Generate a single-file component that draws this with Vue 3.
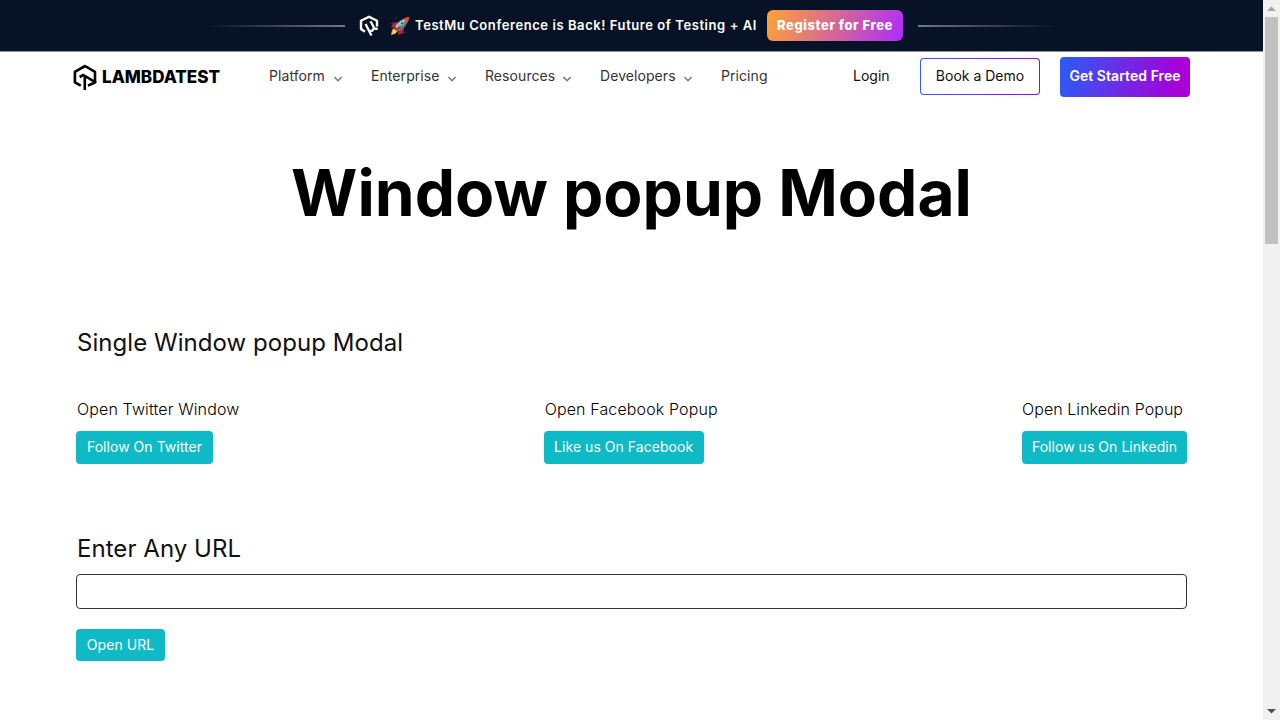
<script setup>
const menu = [
  { label: 'Platform', width: 102, text: 57, drop: true },
  { label: 'Enterprise', width: 114, text: 69, drop: true },
  { label: 'Resources', width: 115, text: 70, drop: true },
  { label: 'Developers', width: 121, text: 76, drop: true },
  { label: 'Pricing', width: 60, text: 47, drop: false }
]
const popups = [
  { title: 'Open Twitter Window', button: 'Follow On Twitter', id: 'twitter' },
  { title: 'Open Facebook Popup', button: 'Like us On Facebook', id: 'facebook' },
  { title: 'Open Linkedin Popup', button: 'Follow us On Linkedin', id: 'linkedin' }
]
</script>

<template>
  <div class="window">
    <div class="page">
      <div class="banner">
        <span class="line left"></span>
        <svg class="mu" viewBox="0 0 20 22" width="20" height="22">
          <path d="M6 16.8 2 14V5.8L10 1.7 18 5.8V11.5" fill="none" stroke="#fff" stroke-width="2.4" stroke-linejoin="round" />
          <path d="M6.6 9 12.4 20.4M11.6 6.2 15 12.8Q16 14.6 18.6 13.4M10.2 15.6Q14.4 16.8 14.8 12.5" fill="none" stroke="#fff" stroke-width="2.3" />
        </svg>
        <svg class="rocket" viewBox="0 0 20 20" width="20" height="20">
          <path d="M1 8 4 6M5 2l2-1M13 17l3-1" stroke="#303d4d" stroke-width="1" />
          <path d="M8 6 3 7 1 12l5-1zM14 12l-1 5-5 2 1-6z" fill="#bd2431" />
          <path d="M5 11Q8 4 18 1.5 17.5 11 8.7 15z" fill="#9abac6" />
          <path d="M6.5 12.5Q12 10 18 1.5 17.5 11 8.7 15z" fill="#547e8f" />
          <path d="M13 3Q16 1.2 19.3 .8 19.3 4.5 17 7.4 16.3 4.5 13 3z" fill="#ee4931" />
          <circle cx="12.2" cy="7.4" r="1.6" fill="#304f67" stroke="#c5dbe3" stroke-width=".7" />
          <path d="M4 12 2 14 1 19l4-1 3-3z" fill="#f7a331" />
          <path d="M4 14 2 18l4-2z" fill="#fff19b" />
          <path d="M9 10 5 15 11 12z" fill="#c72c35" />
        </svg>
        <span class="announce">TestMu Conference is Back! Future of Testing + AI</span>
        <a class="register">Register for Free</a>
        <span class="line right"></span>
      </div>

      <header class="header">
        <div class="brand">
          <svg viewBox="0 0 24 27" width="24" height="27">
            <path d="M7.8 21.6 1.9 18.3V7.8L12 2 22 7.8V18" fill="none" stroke="#000" stroke-width="2.6" stroke-linejoin="round" />
            <path d="M6.6 13 10.3 11 22.3 18.2 15 21.6M11.8 12.5V26" fill="none" stroke="#000" stroke-width="2.6" stroke-linejoin="round" />
          </svg>
          <svg class="wordmark" width="120" height="20" viewBox="0 0 120 20">
            <text x="0" y="15.8" textLength="118" lengthAdjust="spacingAndGlyphs">LAMBDATEST</text>
          </svg>
        </div>
        <nav class="nav">
          <div v-for="item in menu" :key="item.label" class="item" :style="{ width: item.width + 'px' }">
            <span :style="{ width: item.text + 'px' }">{{ item.label }}</span>
            <svg v-if="item.drop" width="10" height="8" viewBox="0 0 10 8">
              <path d="M1.4 2 5 5.7 8.6 2" fill="none" stroke="#777" stroke-width="1.5" />
            </svg>
          </div>
        </nav>
        <a class="login">Login</a>
        <a class="demo">Book a Demo</a>
        <a class="start">Get Started Free</a>
      </header>

      <h1>Window popup Modal</h1>

      <main>
        <h2>Single Window popup Modal</h2>
        <div class="popups">
          <section v-for="p in popups" :key="p.id" :class="p.id">
            <p>{{ p.title }}</p>
            <button class="teal">{{ p.button }}</button>
          </section>
        </div>
        <h2 class="url-title">Enter Any URL</h2>
        <input type="text" aria-label="URL" />
        <button class="teal open">Open URL</button>
      </main>
    </div>
    <div class="scrollbar">
      <svg width="17" height="17"><path d="M4 11h9L8.5 6.5z" fill="#a3a3a3" /></svg>
      <div class="thumb"></div>
      <svg class="down" width="17" height="17"><path d="M4 6h9L8.5 10.5z" fill="#505050" /></svg>
    </div>
  </div>
</template>

<style>
body { margin: 0; overflow: hidden; }
</style>

<style scoped>
* { box-sizing: border-box; }
.window { width: 1280px; height: 720px; display: flex; overflow: hidden; background: #fff; font-family: Inter, sans-serif; color: #000; }
.page { width: 1263px; height: 720px; }
.banner { height: 52px; background: #081226; border-bottom: 1px solid #8e929f; display: flex; align-items: center; white-space: nowrap; }
.line { height: 2px; width: 137px; flex: none; margin-top: 1px; }
.left { margin-left: 208px; background: linear-gradient(90deg, transparent, #737986); }
.right { margin-left: 15px; background: linear-gradient(90deg, #737986, transparent); }
.mu { margin-left: 14px; flex: none; }
.rocket { margin-left: 11px; flex: none; }
.announce { margin-left: 5px; margin-bottom: 1px; width: 342px; flex: none; font-size: 13px; font-weight: 600; letter-spacing: .57px; color: #fff; line-height: 20px; }
.register { margin-left: 10px; width: 136px; height: 31px; border-radius: 6px; flex: none; background: linear-gradient(110deg, #ffa335, #ac2cfb); color: #fff; font-weight: 800; font-size: 13px; letter-spacing: .57px; line-height: 31px; text-align: center; }
.header { height: 50px; display: flex; align-items: center; font-size: 14px; color: #333; white-space: nowrap; }
.brand { width: 196px; margin-left: 73px; display: flex; align-items: center; flex: none; }
.wordmark { margin-left: 5px; font-family: Inter, sans-serif; font-size: 17px; font-weight: 800; fill: #000; }
.nav { display: flex; width: 584px; flex: none; margin-bottom: 2px; }
.item { display: flex; align-items: center; flex: none; line-height: 20px; letter-spacing: .07px; }
.item svg { margin-left: 7px; margin-top: 5px; }
.login { width: 67px; color: #111; margin-bottom: 3px; }
.demo { width: 120px; height: 37px; margin-bottom: 1px; flex: none; border: 1px solid transparent; border-radius: 4px; background: linear-gradient(#fff, #fff) padding-box, linear-gradient(90deg, #2c5dff, #aa00d4) border-box; text-align: center; line-height: 34px; color: #111; }
.start { width: 130px; height: 40px; margin-left: 20px; flex: none; border-radius: 4px; background: linear-gradient(100deg, #2b5cf5, #a700d8 90%); color: #fff; line-height: 38px; text-align: center; font-weight: 600; letter-spacing: .06px; }
h1 { margin: 52px 0 0; height: 77px; line-height: 77px; font-size: 64px; font-weight: 700; text-align: center; }
main { margin: 96px 76px 0; }
h2 { font-weight: 400; font-size: 24px; line-height: 32px; margin: 0; padding-left: 1px; color: #111; letter-spacing: .05px; }
.popups { display: flex; justify-content: space-between; margin-top: 36px; }
.popups p { margin: 0 0 7px; font-size: 16px; line-height: 29px; font-weight: 300; padding-left: 1px; white-space: nowrap; letter-spacing: .13px; }
.popups .linkedin p { padding-left: 0; letter-spacing: .06px; }
.twitter .teal { width: 137px; }
.facebook .teal { width: 160px; }
.linkedin .teal { width: 165px; }
.teal { display: block; height: 33px; border: 0; padding: 0 0 2px; background: #0ebac5; border-radius: 4px; color: #fff; font-family: Inter, sans-serif; font-size: 14px; line-height: 31px; white-space: nowrap; letter-spacing: .04px; }
.url-title { margin-top: 69px; }
input { display: block; width: 1111px; height: 35px; border: 1px solid #333; border-radius: 4px; background: #fff; margin: 9px 0 20px; outline: 0; }
.open { width: 89px; height: 32px; }
.scrollbar { width: 17px; height: 720px; background: #f1f1f1; display: flex; flex-direction: column; flex: none; }
.scrollbar svg { display: block; flex: none; }
.thumb { width: 13px; height: 227px; margin-left: 2px; background: #c1c1c1; flex: none; }
.down { margin-top: auto; }
</style>
